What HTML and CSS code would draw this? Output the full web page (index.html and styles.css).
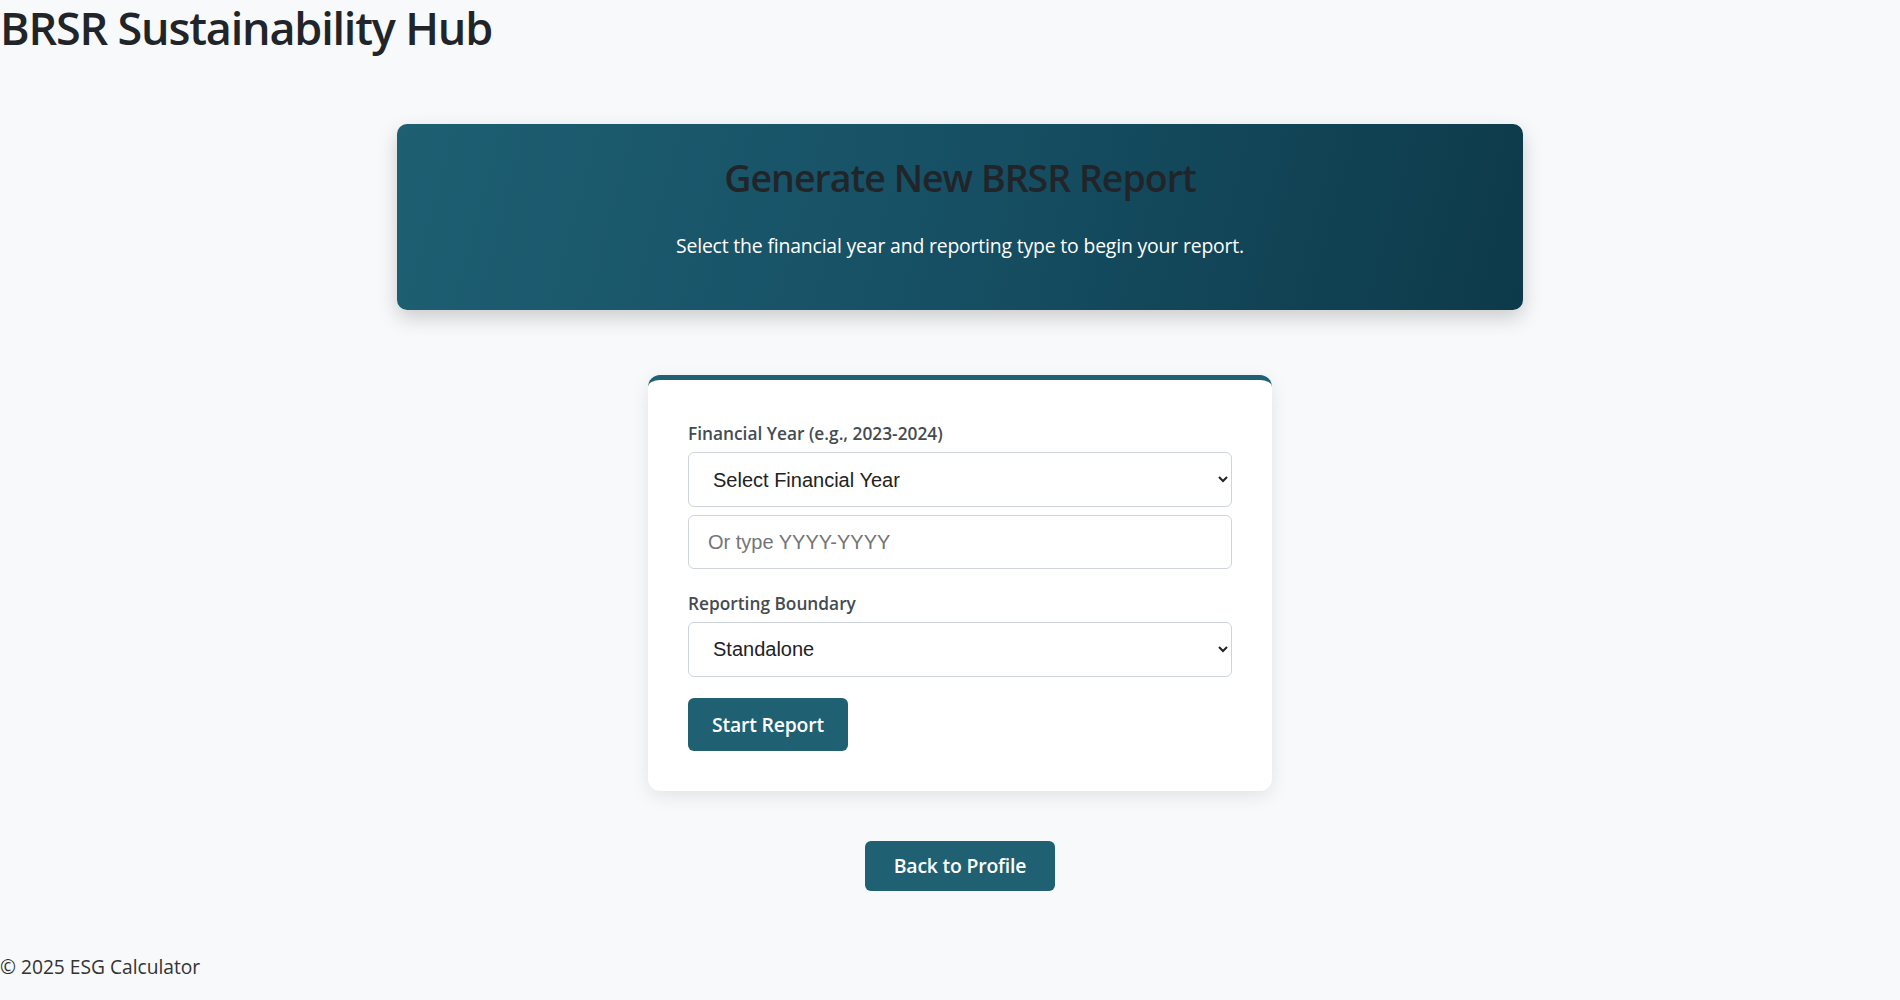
FILE: index.html
```html
<!DOCTYPE html>
<html lang="en">
<head>
<meta charset="utf-8">
<title>BRSR Sustainability Hub</title>
<link rel="stylesheet" href="styles.css">
</head>
<body>
<header class="site-header">
  <h1 class="site-title">BRSR Sustainability Hub</h1>
</header>
<main class="page">
  <section class="hero">
    <h2 class="hero-title">Generate New BRSR Report</h2>
    <p class="hero-text">Select the financial year and reporting type to begin your report.</p>
  </section>
  <form class="card">
    <label class="field-label" for="fy">Financial Year (e.g., 2023-2024)</label>
    <select class="control" id="fy">
      <option>Select Financial Year</option>
      <option>2023-2024</option>
      <option>2022-2023</option>
    </select>
    <input class="control control-input" type="text" placeholder="Or type YYYY-YYYY">
    <label class="field-label field-label-gap" for="rb">Reporting Boundary</label>
    <select class="control" id="rb">
      <option>Standalone</option>
      <option>Consolidated</option>
    </select>
    <button class="btn btn-start" type="button">Start Report</button>
  </form>
  <button class="btn btn-back" type="button">Back to Profile</button>
</main>
<footer class="site-footer">
  <p class="footer-text">© 2025 ESG Calculator</p>
</footer>
</body>
</html>
```
FILE: styles.css
```css
html, body {
  margin: 0;
  padding: 0;
}
body {
  background: #f8f9fa;
  font-family: "Open Sans", "Noto Sans", sans-serif;
  color: #212529;
  width: 1900px;
  min-height: 1000px;
}
.site-header {
  padding: 0;
}
.site-title {
  margin: 0;
  font-size: 45px;
  line-height: 56px;
  font-weight: 600;
  color: #212529;
  letter-spacing: -1.2px;
}
.page {
  display: flex;
  flex-direction: column;
  align-items: center;
  padding: 68px 0 0 20px;
}
.hero {
  width: 1126px;
  box-sizing: border-box;
  padding: 28px 20px 31px;
  border-radius: 10px;
  background: linear-gradient(105deg, #1e5f72 0%, #175166 45%, #0d3a4a 100%);
  box-shadow: 0 8px 20px rgba(0, 0, 0, 0.18);
  text-align: center;
}
.hero-title {
  margin: 0 0 29px;
  font-size: 37.5px;
  font-weight: 600;
  color: #212529;
  letter-spacing: -1px;
}
.hero-text {
  margin: 0 0 20px;
  font-size: 19.4px;
  color: #ffffff;
  letter-spacing: -0.17px;
}
.card {
  width: 624px;
  box-sizing: border-box;
  margin-top: 65px;
  padding: 42px 40px 40px;
  background: #ffffff;
  border-top: 5px solid #1f6073;
  border-radius: 12px;
  box-shadow: 0 5px 18px rgba(0, 0, 0, 0.09);
  display: flex;
  flex-direction: column;
  align-items: flex-start;
}
.field-label {
  font-size: 17.3px;
  font-weight: 600;
  color: #444b52;
  margin-bottom: 7px;
}
.field-label-gap {
  margin-top: 22.5px;
}
.control {
  width: 544px;
  height: 55px;
  box-sizing: border-box;
  border: 1px solid #ced4da;
  border-radius: 6px;
  background: #ffffff;
  font-family: "Liberation Sans", Arial, sans-serif;
  font-size: 20px;
  color: #222222;
  padding: 0 16px 0 20px;
  margin: 0;
}
.control-input {
  height: 54px;
  margin-top: 8px;
  padding-left: 19px;
}
.control-input::placeholder {
  color: #757575;
}
.btn {
  border: none;
  border-radius: 6px;
  background: #1f6073;
  color: #ffffff;
  font-family: "Open Sans", "Noto Sans", sans-serif;
  font-size: 19.4px;
  font-weight: 600;
  letter-spacing: -0.2px;
  cursor: pointer;
}
.btn-start {
  margin-top: 21px;
  width: 160px;
  height: 53px;
  padding: 0;
}
.btn-back {
  margin-top: 50px;
  width: 190px;
  height: 50px;
  padding: 0;
}
.site-footer {
  margin-top: 62px;
}
.footer-text {
  margin: 0;
  font-size: 19.2px;
  color: #333333;
}
```
